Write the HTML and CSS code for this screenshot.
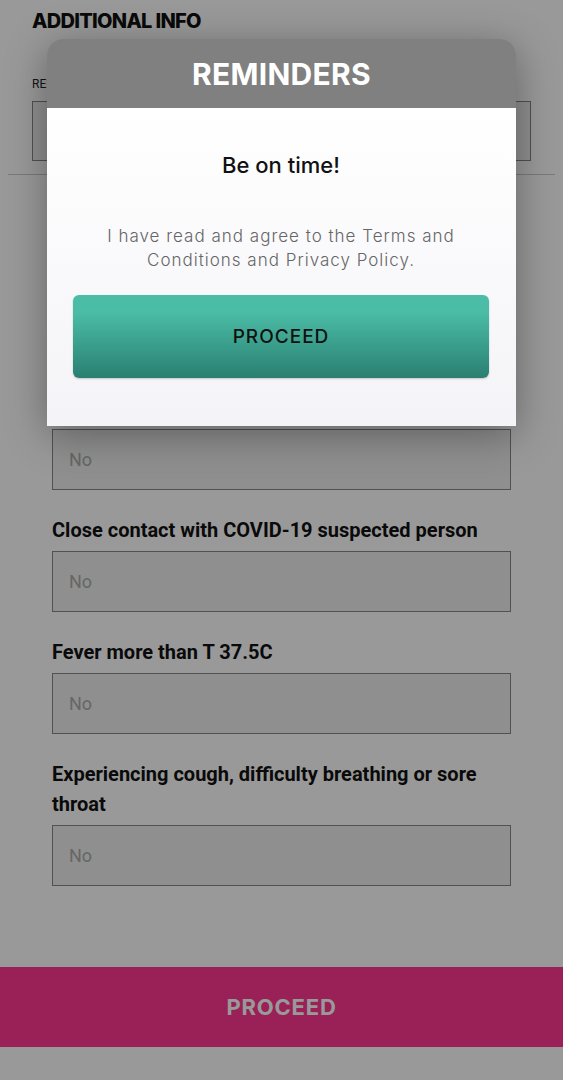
FILE: index.html
```html
<!DOCTYPE html>
<html lang="en">
<head>
    <meta charset="UTF-8">
    <meta name="viewport" content="width=device-width, initial-scale=1.0">
    <title>Booking - Additional Info</title>
    <link rel="stylesheet" href="styles.css">
</head>
<body>
    <div class="page">
        <div class="info-section">
            <h2 class="section-title">ADDITIONAL INFO</h2>
            <div class="small-label">REMARKS</div>
            <div class="text-box"></div>
        </div>

        <div class="questions">
            <div class="field">
                <div class="field-label">Travel history in the past 14 days</div>
                <div class="field-box">No</div>
            </div>

            <div class="field">
                <div class="field-label">Confirmed COVID-19 case in household</div>
                <div class="field-box">No</div>
            </div>

            <div class="field">
                <div class="field-label">Close contact with COVID-19 suspected person</div>
                <div class="field-box">No</div>
            </div>

            <div class="field">
                <div class="field-label">Fever more than T 37.5C</div>
                <div class="field-box">No</div>
            </div>

            <div class="field">
                <div class="field-label">Experiencing cough, difficulty breathing or sore throat</div>
                <div class="field-box">No</div>
            </div>
        </div>

        <button class="main-btn">PROCEED</button>
    </div>

    <div class="overlay"></div>

    <div class="modal">
        <div class="modal-header">
            <h2>REMINDERS</h2>
        </div>
        <div class="modal-body">
            <div class="modal-title">Be on time!</div>
            <p class="modal-text">I have read and agree to the Terms and Conditions and Privacy Policy.</p>
            <button class="modal-btn">PROCEED</button>
        </div>
    </div>
</body>
</html>
```

FILE: styles.css
```css
body {
    margin: 0;
    background: white;
    font-family: Roboto, "Liberation Sans", sans-serif;
    color: #111;
}
.page {
    padding: 0 8px 33px 8px;
}
.info-section {
    padding: 6px 24px 13px 24px;
    border-bottom: 1px solid #ccc;
}
.section-title {
    margin: 0;
    font-family: Inter, sans-serif;
    font-size: 20px;
    font-weight: 800;
    line-height: 30px;
    letter-spacing: -0.7px;
}
.small-label {
    margin-top: 41px;
    font-size: 12px;
    line-height: 14px;
    color: #222;
}
.text-box {
    margin-top: 10px;
    height: 58px;
    border: 1px solid #888;
    background: #eee;
}
.questions {
    padding: 71px 44px 0 44px;
}
.field {
    margin-top: 25px;
}
.field-label {
    font-size: 20px;
    font-weight: 700;
    line-height: 30px;
    color: #111;
}
.field-box {
    margin-top: 6px;
    height: 59px;
    border: 1px solid #888;
    background: #eee;
    padding-left: 16px;
    display: flex;
    align-items: center;
    font-size: 18px;
    color: #aaa;
}
.main-btn {
    display: block;
    width: calc(100% + 16px);
    margin: 81px -8px 0 -8px;
    height: 80px;
    border: none;
    background: #ff3791;
    color: white;
    font-family: Inter, sans-serif;
    font-size: 22px;
    font-weight: 700;
    letter-spacing: 0.8px;
}
.overlay {
    position: fixed;
    top: 0;
    left: 0;
    right: 0;
    bottom: 0;
    background: rgba(0, 0, 0, 0.4);
}
.modal {
    position: absolute;
    top: 39px;
    left: 47px;
    width: 469px;
    box-shadow: 0 8px 40px rgba(0, 0, 0, 0.35);
    border-radius: 16px 16px 0 0;
}
.modal-header {
    height: 69px;
    background: #808080;
    border-radius: 16px 16px 0 0;
    display: flex;
    align-items: center;
    justify-content: center;
}
.modal-header h2 {
    margin: 0;
    color: white;
    font-family: Inter, sans-serif;
    font-size: 30px;
    font-weight: 700;
    letter-spacing: 0.3px;
}
.modal-body {
    background: linear-gradient(#ffffff, #f4f4f8);
    padding: 42px 27px 48px 26px;
    text-align: center;
}
.modal-title {
    font-family: Inter, sans-serif;
    font-size: 22px;
    font-weight: 500;
    line-height: 30px;
    color: #111;
}
.modal-text {
    margin: 44px 0 0 0;
    padding: 0 25px;
    font-family: Inter, sans-serif;
    font-size: 17px;
    font-weight: 300;
    line-height: 24px;
    letter-spacing: 1px;
    color: #666;
}
.modal-btn {
    display: block;
    width: 100%;
    height: 83px;
    margin-top: 23px;
    border: none;
    border-radius: 6px;
    background: linear-gradient(#4bbda6 20%, #2a7f71);
    box-shadow: 0 1px 2px rgba(0, 0, 0, 0.2);
    font-family: Inter, sans-serif;
    font-size: 19px;
    font-weight: 500;
    letter-spacing: 1px;
    color: #111;
}
```
